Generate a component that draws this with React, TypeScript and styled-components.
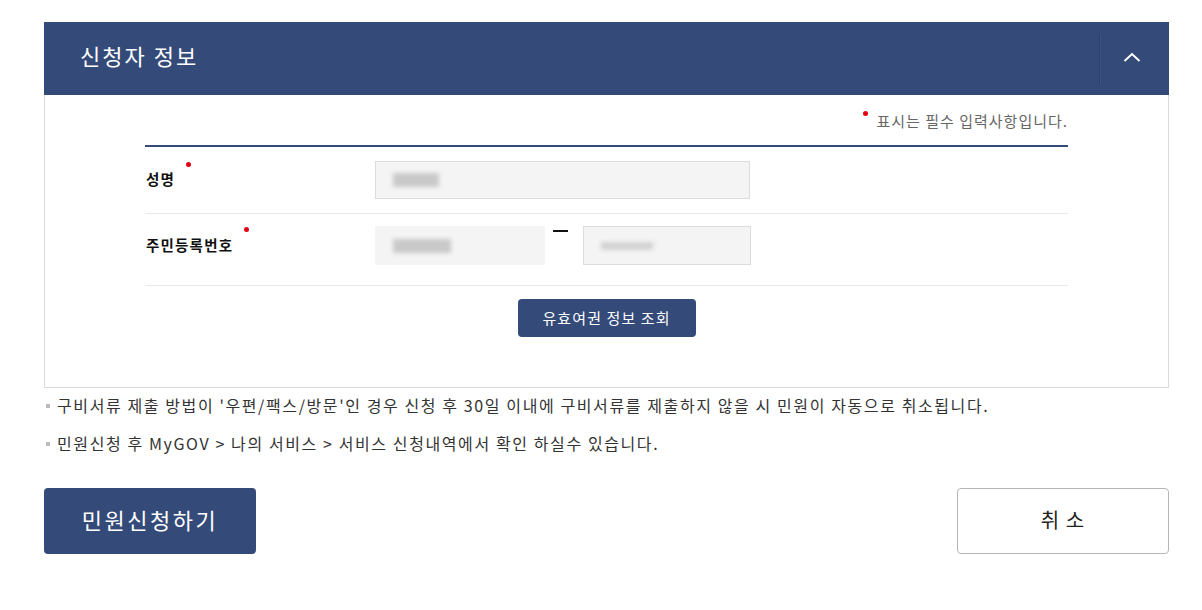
import styled, {createGlobalStyle} from "styled-components"
import {FC} from "react"

const GlobalStyle = createGlobalStyle`
  body {
    margin: 0;
    background: #fff;
    font-family: "Noto Sans CJK KR", "Noto Sans", sans-serif;
    color: #222;
  }
`

const App: FC = () => {
  return <Page>
    <GlobalStyle />
    <Panel>
      <PanelHeader>
        <PanelTitle>신청자 정보</PanelTitle>
        <ToggleButton aria-label="접기">
          <svg width="18" height="10" viewBox="0 0 18 10" fill="none">
            <path d="M1.5 9L9 2L16.5 9" stroke="#fff" strokeWidth="2" />
          </svg>
        </ToggleButton>
      </PanelHeader>
      <PanelBody>
        <RequiredNote><Dot $raise={9} />표시는 필수 입력사항입니다.</RequiredNote>
        <FormTable>
          <FormRow $pt={14} $pb={14}>
            <Label>성명<Dot $raise={17} /></Label>
            <Field $w={375} $h={38}><Blur $w={46} $dark /></Field>
          </FormRow>
          <FormRow $pt={12} $pb={20}>
            <Label>주민등록번호<Dot $raise={17} /></Label>
            <FieldGroup>
              <Field $w={170} $h={39} $plain><Blur $w={58} $dark /></Field>
              <Dash />
              <Field $w={168} $h={39}><Blur $w={52} $thin /></Field>
            </FieldGroup>
          </FormRow>
        </FormTable>
        <CenterRow>
          <SmallButton>유효여권 정보 조회</SmallButton>
        </CenterRow>
      </PanelBody>
    </Panel>
    <Notes>
      <Note>구비서류 제출 방법이 '우편/팩스/방문'인 경우 신청 후 30일 이내에 구비서류를 제출하지 않을 시 민원이 자동으로 취소됩니다.</Note>
      <Note>민원신청 후 MyGOV &gt; 나의 서비스 &gt; 서비스 신청내역에서 확인 하실수 있습니다.</Note>
    </Notes>
    <Actions>
      <PrimaryButton>민원신청하기</PrimaryButton>
      <CancelButton>취 소</CancelButton>
    </Actions>
  </Page>
}

const Page = styled.div`
  width: 1125px;
  margin: 22px 0 0 44px;
`

const Panel = styled.section`
  border: 1px solid #dadada;
  border-top: 0;
`

const PanelHeader = styled.div`
  height: 73px;
  margin: 0 -1px;
  background: #344a79;
  display: flex;
  align-items: center;
  justify-content: space-between;
`

const PanelTitle = styled.h2`
  margin: 0 0 0 36px;
  padding-bottom: 7px;
  font-size: 22px;
  font-weight: 400;
  color: #fff;
  letter-spacing: 2px;
`

const ToggleButton = styled.button`
  width: 70px;
  height: 50px;
  border: 0;
  border-left: 1px solid #2c406b;
  box-shadow: inset 1px 0 0 #40557f;
  background: transparent;
  display: flex;
  align-items: center;
  justify-content: center;
  padding: 0 5px 3px 0;
  cursor: pointer;
`

const PanelBody = styled.div`
  padding: 15px 100px 50px 100px;
`

const RequiredNote = styled.p`
  margin: 0 0 13px;
  text-align: right;
  font-size: 15px;
  line-height: 22px;
  color: #666;
  letter-spacing: 1px;
`

const Dot = styled.span<{$raise: number}>`
  display: inline-block;
  width: 5px;
  height: 5px;
  border-radius: 50%;
  background: #e60012;
  margin: 0 9px 0 11px;
  position: relative;
  top: ${(p) => -p.$raise}px;
  vertical-align: middle;
  letter-spacing: 0;
`

const FormTable = styled.div`
  border-top: 2px solid #344a79;
`

const FormRow = styled.div<{$pt: number, $pb: number}>`
  display: flex;
  align-items: center;
  padding: ${(p) => p.$pt}px 0 ${(p) => p.$pb}px;
  border-bottom: 1px solid #e9e9e9;
`

const Label = styled.div`
  width: 229px;
  padding: 0 0 3px 1px;
  font-size: 14.5px;
  font-weight: 700;
  color: #111;
  letter-spacing: 1.2px;
`

const FieldGroup = styled.div`
  display: flex;
  align-items: flex-start;
`

const Field = styled.div<{$w: number, $h: number, $plain?: boolean}>`
  width: ${(p) => p.$w}px;
  height: ${(p) => p.$h}px;
  box-sizing: border-box;
  background: #f4f4f4;
  border: 1px solid ${(p) => p.$plain ? "#f4f4f4" : "#dcdcdc"};
  display: flex;
  align-items: center;
  padding-left: 17px;
`

const Blur = styled.span<{$w: number, $dark?: boolean, $thin?: boolean}>`
  display: block;
  width: ${(p) => p.$w}px;
  height: ${(p) => p.$thin ? 8 : 14}px;
  background: ${(p) => p.$dark ? "#c9c9c9" : "#d2d2d2"};
  filter: blur(2px);
`

const Dash = styled.span`
  width: 15px;
  height: 2px;
  background: #111;
  margin: 4px 15px 0 8px;
`

const CenterRow = styled.div`
  display: flex;
  justify-content: center;
  padding-top: 13px;
`

const SmallButton = styled.button`
  width: 178px;
  height: 38px;
  padding: 0 0 2px;
  border: 0;
  border-radius: 4px;
  background: #344a79;
  color: #fff;
  font-family: inherit;
  font-size: 15px;
  letter-spacing: 1.1px;
  cursor: pointer;
`

const Notes = styled.ul`
  list-style: none;
  margin: 0;
  padding: 0;
  display: flex;
  flex-direction: column;
  gap: 4px;
`

const Note = styled.li`
  position: relative;
  padding-left: 13px;
  font-size: 16px;
  line-height: 34px;
  color: #333;
  letter-spacing: 1.6px;
  &::before {
    content: "";
    position: absolute;
    left: 2px;
    top: 16px;
    width: 4px;
    height: 4px;
    background: #bbb;
  }
`

const Actions = styled.div`
  display: flex;
  justify-content: space-between;
  margin-top: 28px;
`

const PrimaryButton = styled.button`
  width: 212px;
  height: 66px;
  padding: 0 0 4px;
  border: 0;
  border-radius: 4px;
  background: #344a79;
  color: #fff;
  font-family: inherit;
  font-size: 22px;
  letter-spacing: 2.5px;
  cursor: pointer;
`

const CancelButton = styled.button`
  width: 212px;
  height: 66px;
  padding: 0 0 4px;
  border: 1px solid #b5b5b5;
  border-radius: 4px;
  background: #fff;
  color: #222;
  font-family: inherit;
  font-size: 20px;
  letter-spacing: 1px;
  cursor: pointer;
`

export default App
